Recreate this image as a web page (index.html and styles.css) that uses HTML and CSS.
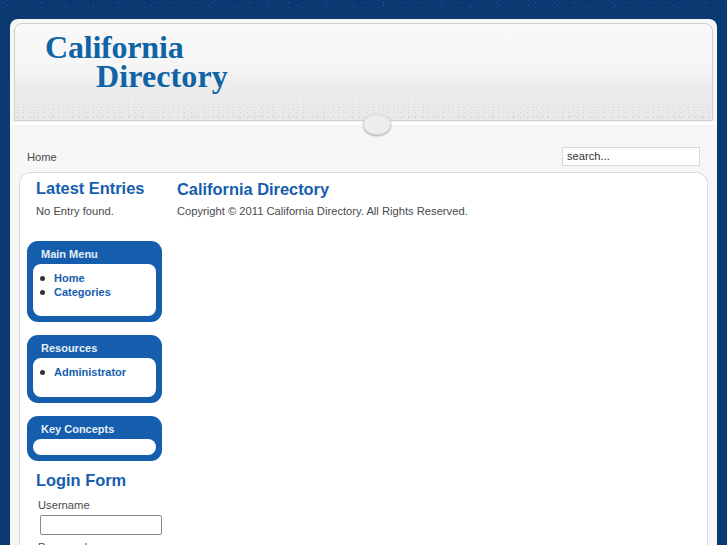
FILE: index.html
```html
<!DOCTYPE html>
<html lang="en">
<head>
<meta charset="utf-8">
<title>California Directory</title>
<link rel="stylesheet" href="styles.css">
</head>
<body>
<div class="specks"></div>
<div class="wrapper">
  <header class="header">
    <div class="logo">
      <div class="logo-line">California</div>
      <div class="logo-line logo-indent">Directory</div>
    </div>
  </header>
  <div class="divider"><span class="knob"></span></div>
  <div class="topbar">
    <span class="crumb">Home</span>
    <input class="search" type="text" value="search...">
  </div>
  <div class="content">
    <aside class="sidebar">
      <h3 class="heading">Latest Entries</h3>
      <p class="note">No Entry found.</p>
      <section class="module module-main">
        <h4 class="module-title">Main Menu</h4>
        <ul class="module-body tall">
          <li><a href="#">Home</a></li>
          <li><a href="#">Categories</a></li>
        </ul>
      </section>
      <section class="module">
        <h4 class="module-title">Resources</h4>
        <ul class="module-body mid">
          <li><a href="#">Administrator</a></li>
        </ul>
      </section>
      <section class="module">
        <h4 class="module-title">Key Concepts</h4>
        <div class="module-body empty"></div>
      </section>
      <h3 class="heading login-heading">Login Form</h3>
      <form class="login">
        <label class="field-label">Username</label>
        <input class="field" type="text">
        <label class="field-label">Password</label>
      </form>
    </aside>
    <main class="main">
      <h2 class="title">California Directory</h2>
      <p class="copy">Copyright © 2011 California Directory. All Rights Reserved.</p>
    </main>
  </div>
</div>
</body>
</html>
```

FILE: styles.css
```css
html, body {
  margin: 0;
  height: 545px;
  overflow: hidden;
}
body {
  position: relative;
  background: #0b3a72;
  font-family: "Liberation Sans", Arial, sans-serif;
  font-size: 11.2px;
  color: #4a4a4a;
  padding: 19px 10px 0;
  box-sizing: border-box;
}
.specks {
  position: absolute;
  left: 0;
  right: 0;
  top: 0;
  height: 10px;
  background-image:
    radial-gradient(circle at 3.5px 2.5px, #1c62ad 0.7px, transparent 0.8px),
    radial-gradient(circle at 6.5px 5.5px, #1c62ad 0.7px, transparent 0.8px),
    radial-gradient(circle at 2.5px 7.5px, #15508f 0.7px, transparent 0.8px);
  background-size: 19px 10px, 29px 10px, 13px 10px;
}
.wrapper {
  position: relative;
  height: 526px;
  border-radius: 8px 8px 0 0;
  background-color: #f8f8f8;
  background-image: conic-gradient(#f2f2f2 25%, #fbfbfb 0 50%, #f2f2f2 0 75%, #fbfbfb 0);
  background-size: 2px 2px;
  padding: 4px 4px 0;
  box-sizing: border-box;
}
.header {
  position: relative;
  height: 98px;
  box-sizing: border-box;
  border: 1px solid #cfcfcf;
  border-radius: 8px 8px 0 0;
  background-image:
    conic-gradient(rgba(0, 0, 0, 0.018) 25%, transparent 0 50%, rgba(0, 0, 0, 0.018) 0 75%, transparent 0),
    linear-gradient(#fbfbfb 0, #f8f8f8 45%, #efefef 65%, #ebebeb 100%);
  background-size: 2px 2px, 100% 100%;
  padding: 9px 0 0 30px;
}
.header::after {
  content: "";
  position: absolute;
  left: 0;
  right: 0;
  bottom: 0;
  height: 26px;
  background-image:
    radial-gradient(circle at 2.5px 2.5px, #e6cfcf 0.7px, transparent 0.8px),
    radial-gradient(circle at 1.5px 3.5px, #cfcfcf 0.7px, transparent 0.8px),
    radial-gradient(circle at 4.5px 1.5px, #d4d4d4 0.7px, transparent 0.8px),
    radial-gradient(circle at 3.5px 4.5px, #cccccc 0.7px, transparent 0.8px);
  background-size: 17px 11px, 7px 5px, 11px 7px, 5px 6px;
  -webkit-mask-image: linear-gradient(transparent, #000 80%);
  mask-image: linear-gradient(transparent, #000 80%);
}
.logo {
  font-family: "Liberation Serif", "Times New Roman", serif;
  font-weight: bold;
  font-size: 32px;
  line-height: 29px;
  color: #0f64a6;
}
.logo-line {
  letter-spacing: -0.2px;
}
.logo-indent {
  padding-left: 51px;
  letter-spacing: 0.1px;
}
.divider {
  position: relative;
  height: 3px;
  margin: 1px -4px 0;
  background: #fff;
}
.knob {
  position: absolute;
  left: 353px;
  top: -8px;
  width: 26px;
  height: 19px;
  border-radius: 50%;
  background: #eeeeee;
  border: 1px solid #dcdcdc;
  box-shadow: 0 1px 2px #aaa;
}
.topbar {
  display: flex;
  justify-content: space-between;
  align-items: center;
  height: 18px;
  margin: 22px 13px 7px;
}
.crumb {
  padding-top: 2px;
}
.search {
  width: 138px;
  height: 19px;
  box-sizing: border-box;
  border: 1px solid #d8d8d8;
  background: #fff;
  padding: 0 4px;
  margin: 0;
  font: 11.2px "Liberation Sans", Arial, sans-serif;
  color: #333;
}
.content {
  display: flex;
  margin: 0 5px;
  height: 400px;
  background: #fff;
  border: 1px solid #dcdcdc;
  border-bottom: 0;
  border-radius: 12px 12px 0 0;
  box-sizing: border-box;
}
.sidebar {
  width: 135px;
  margin-left: 7px;
  flex: none;
}
.heading {
  margin: 4px 0 0 9px;
  font-size: 16.4px;
  line-height: 22px;
  color: #155eae;
}
.note {
  margin: 4px 0 0 9px;
  line-height: 16px;
}
.module {
  background: #155eae;
  border-radius: 11px;
  padding: 4px 6px 6px;
  margin-bottom: 13px;
}
.module-main {
  margin-top: 22px;
}
.module-title {
  margin: 0;
  padding: 0 0 1px 8px;
  font-size: 11px;
  line-height: 18px;
  color: #e8eef6;
}
.module-body {
  margin: 0;
  background: #fff;
  border-radius: 8px;
  list-style: none;
  padding: 7px 0 0 7px;
  box-sizing: border-box;
  font-size: 11px;
  line-height: 14px;
  font-weight: bold;
}
.module-body li {
  display: flex;
  align-items: center;
}
.module-body li::before {
  content: "";
  width: 5px;
  height: 5px;
  margin-right: 9px;
  border-radius: 50%;
  background: #333;
}
.module-body a {
  color: #155eae;
  text-decoration: none;
}
.tall { height: 52px; }
.mid { height: 39px; }
.empty { height: 16px; padding: 0; }
.login-heading {
  margin-top: -5px;
}
.login {
  padding-left: 11px;
}
.field-label {
  display: block;
  line-height: 16px;
  margin-top: 6px;
}
.field {
  display: block;
  width: 122px;
  height: 20px;
  box-sizing: border-box;
  margin: 2px 0 0 2px;
  border: 1px solid #8a8a8a;
  border-radius: 2px;
  background: #fff;
}
.field + .field-label {
  margin-top: 4px;
}
.main {
  margin-left: 15px;
}
.title {
  margin: 5px 0 0;
  font-size: 16.4px;
  line-height: 22px;
  color: #155eae;
}
.copy {
  margin: 3px 0 0;
  line-height: 16px;
}
```
